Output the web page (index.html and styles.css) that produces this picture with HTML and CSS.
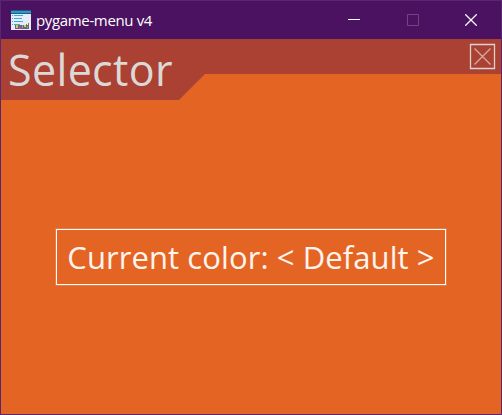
FILE: index.html
```html
<!DOCTYPE html>
<html lang="en">
<head>
<meta charset="utf-8">
<title>pygame-menu v4</title>
<link rel="stylesheet" href="styles.css">
</head>
<body>
<div class="window">
  <header class="titlebar">
    <svg class="app-icon" width="20" height="20" viewBox="0 0 20 20" shape-rendering="crispEdges">
      <path fill="#e6edf7" d="M0 0h20v20H0z"/>
      <path fill="#1c5f86" d="M0 0h20v4H0z"/>
      <path fill="#3296c4" d="M0 1h20v2H0z"/>
      <path fill="#35aede" d="M3 5h9v1H3zM3 8h8v1H3zM3 11h9v1H3zM3 14h6v1H3zM1 5h1v1H1zM1 8h1v1H1zM1 11h1v1H1zM1 14h1v1H1z"/>
      <path fill="#696477" d="M4 15h14v4H4z"/>
      <path fill="#d5c94e" d="M5 15h2v3H5zM13 15h2v2h-2z"/>
      <path fill="#b34d9b" d="M8 16h2v3H8zM4 17h1v1H4z"/>
      <path fill="#70b49c" d="M11 15h1v3h-1zM16 16h1v2h-1z"/>
      <path fill="#8f764c" d="M17 13h1v2h-1zM15 14h1v1h-1z"/>
    </svg>
    <span class="app-name">pygame-menu v4</span>
    <div class="controls">
      <svg width="12" height="12" viewBox="0 0 12 12"><path d="M0 5.5h12" stroke="#fff" fill="none"/></svg>
      <svg width="12" height="12" viewBox="0 0 12 12"><path d="M.5.5h11v11H.5z" stroke="#73457f" fill="none"/></svg>
      <svg width="12" height="12" viewBox="0 0 12 12"><path d="M.3.3l11.4 11.4M11.7.3L.3 11.7" stroke="#fff" stroke-width="1.25" fill="none"/></svg>
    </div>
  </header>
  <main class="menu">
    <div class="menubar">
      <h1 class="menu-title">Selector</h1>
      <svg class="menu-close" width="27" height="27" viewBox="0 0 27 27" fill="none">
        <path d="M1.5 1.5h24v24h-24z" stroke="#dcd3d1" stroke-width="1.3"/>
        <path d="M5.5 5.5l16 16M21.5 5.5l-16 16" stroke="#d6a9a1" stroke-width="1.3"/>
      </svg>
    </div>
    <div class="content">
      <div class="selector"><span class="selector-text">Current color: &lt; Default &gt;</span></div>
    </div>
  </main>
</div>
</body>
</html>
```
FILE: styles.css
```css
* { box-sizing: border-box; }
body { margin: 0; }
.window {
  width: 502px;
  height: 415px;
  display: flex;
  flex-direction: column;
  background: #4a1260;
  border: 1px solid #5a2672;
  overflow: hidden;
}
.titlebar {
  flex: 0 0 38px;
  display: flex;
  align-items: center;
  padding: 0 24px 0 10px;
}
.app-icon { margin-top: -1px; }
.app-name {
  margin-left: 5px;
  color: #fff;
  font: 15px/20px "Open Sans", sans-serif;
  letter-spacing: -0.35px;
}
.controls {
  margin-left: auto;
  display: flex;
  gap: 46.5px;
}
.controls svg { display: block; }
.menu {
  flex: 1;
  display: flex;
  flex-direction: column;
  background: #e46424;
  font-family: "Open Sans", sans-serif;
}
.menubar {
  flex: 0 0 61px;
  display: flex;
  justify-content: space-between;
  align-items: flex-start;
  padding: 0 5px 0 7px;
  background: #aa4132;
  clip-path: polygon(0 0, 100% 0, 100% 35px, 204px 35px, 178px 61px, 0 61px);
}
.menu-title {
  margin: 0;
  color: #dcd8d7;
  font-size: 43px;
  font-weight: 400;
  line-height: 61px;
  letter-spacing: 0.35px;
}
.menu-close { margin-top: 4px; }
.content {
  flex: 1;
  display: flex;
  justify-content: center;
  align-items: flex-start;
  padding-top: 129px;
}
.selector {
  width: 390px;
  height: 56px;
  display: flex;
  align-items: center;
  justify-content: center;
  border: 1px solid #fff;
  outline: 1px solid rgba(255, 255, 255, 0.15);
  white-space: nowrap;
}
.selector-text {
  color: #fff4ee;
  font-size: 31px;
  line-height: 54px;
  letter-spacing: 0.08px;
}
```
